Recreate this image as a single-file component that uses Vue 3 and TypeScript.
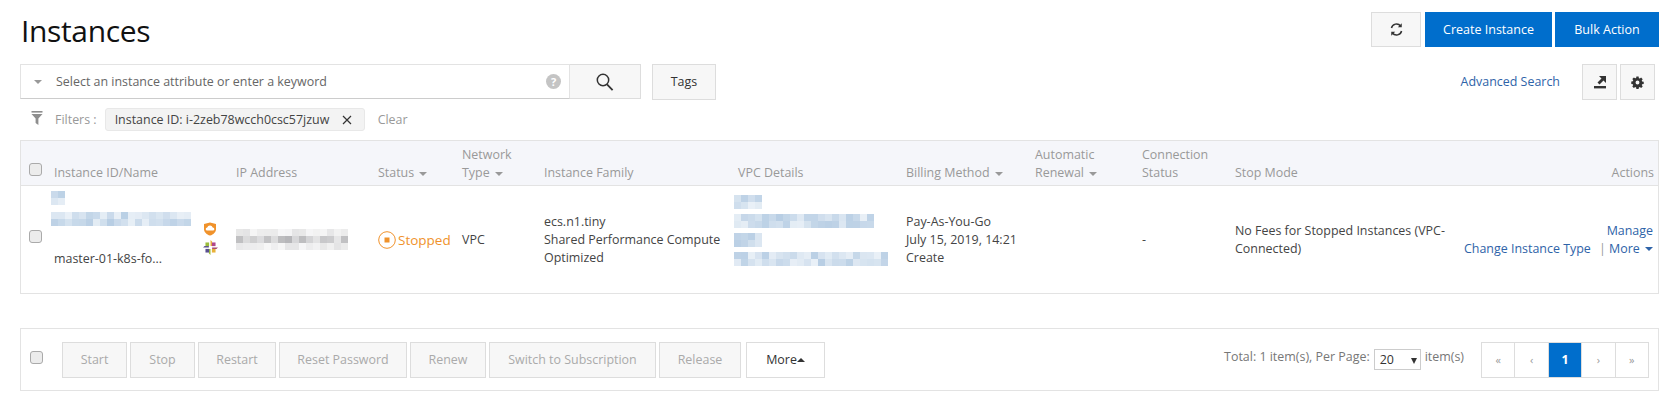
<script setup lang="ts">
type Cell = { a: number }
type Blur = { cols: number; rows: number; tint: string; cells: Cell[] }

// fake pixelated block, same output every run
function blur(cols: number, rows: number, tint: string, seed: number, strength = 0.35): Blur {
  const cells: Cell[] = []
  let s = seed
  for (let i = 0; i < cols * rows; i++) {
    s = (s * 9301 + 49297) % 233280
    const outer = rows > 2 && (i < cols || i >= cols * (rows - 1))
    cells.push({ a: (0.14 + (s / 233280) * strength) * (outer ? 0.35 : 1) })
  }
  return { cols, rows, tint, cells }
}

const blueTint = '110, 155, 200'
const greyTint = '110, 110, 115'

const nameBlurs = [blur(2, 2, blueTint, 11), blur(20, 2, blueTint, 27)]
const ipBlur = blur(16, 3, greyTint, 41, 0.4)
const vpcBlurs = [
  { b: blur(4, 2, blueTint, 5), cls: 'vb-a' },
  { b: blur(20, 2, blueTint, 73), cls: 'vb-b' },
  { b: blur(4, 2, blueTint, 91), cls: 'vb-c' },
  { b: blur(22, 2, blueTint, 17), cls: 'vb-d' },
]

const bulkButtons = ['Start', 'Stop', 'Restart', 'Reset Password', 'Renew', 'Switch to Subscription', 'Release']
const pages = ['«', '‹', '1', '›', '»']
</script>

<template>
  <div class="page">
    <!-- title row -->
    <div class="top">
      <h1>Instances</h1>
      <div class="top-actions">
        <button class="btn icon-btn refresh">
          <svg viewBox="0 0 16 16" width="15" height="15" fill="none" stroke="#333" stroke-width="1.6">
            <path d="M2.6 6.4A5.6 5.6 0 0 1 12.4 4.2" />
            <path d="M13.4 9.6A5.6 5.6 0 0 1 3.6 11.8" />
            <path d="M13.6 1.4v4.2H9.4z" fill="#333" stroke="none" />
            <path d="M2.4 14.6v-4.2h4.2z" fill="#333" stroke="none" />
          </svg>
        </button>
        <button class="btn primary create">Create Instance</button>
        <button class="btn primary bulk">Bulk Action</button>
      </div>
    </div>

    <!-- search row -->
    <div class="search-row">
      <div class="search">
        <span class="caret grey"></span>
        <span class="placeholder">Select an instance attribute or enter a keyword</span>
        <span class="help">?</span>
      </div>
      <button class="btn search-btn">
        <svg viewBox="0 0 20 20" width="20" height="20" fill="none" stroke="#333" stroke-width="1.5">
          <circle cx="8" cy="8" r="5.7" />
          <path d="M12 12.4l5.6 5.8" stroke-width="1.8" />
        </svg>
      </button>
      <button class="btn tags">Tags</button>
      <a class="link advanced">Advanced Search</a>
      <button class="btn square">
        <svg viewBox="0 0 14 14" width="14" height="14" fill="#333">
          <rect x="1" y="11" width="12" height="2.4" />
          <path d="M6 1h7v7l-2.500-2.500L6.500 9.500 4.500 7.500 8.500 3.500z" />
        </svg>
      </button>
      <button class="btn square gear-btn">
        <svg viewBox="0 0 14 14" width="13" height="13">
          <path fill="#333" fill-rule="evenodd" d="M5.8.6h2.4l.3 1.7 1 .4 1.4-1 1.7 1.7-1 1.4.4 1 1.7.3v2.4l-1.7.3-.4 1 1 1.4-1.7 1.7-1.4-1-1 .4-.3 1.7H5.8l-.3-1.7-1-.4-1.4 1-1.7-1.7 1-1.4-.4-1-1.7-.3V5.9l1.7-.3.4-1-1-1.4 1.7-1.7 1.4 1 1-.4zM7 4.9a2.1 2.1 0 1 0 0 4.2 2.1 2.1 0 0 0 0-4.2z" />
        </svg>
      </button>
    </div>

    <!-- active filters -->
    <div class="filters">
      <svg class="funnel" viewBox="0 0 12 14" width="12" height="14" fill="#8e8e8e">
        <rect x="0.5" y="0" width="11" height="1.6" />
        <path d="M0.5 3h11L7.4 7.6V14l-2.8-2V7.6z" />
      </svg>
      <span class="filters-label">Filters :</span>
      <span class="chip">
        Instance ID: i-2zeb78wcch0csc57jzuw
        <svg viewBox="0 0 10 10" width="10" height="10" stroke="#333" stroke-width="1.2">
          <path d="M1 1l8 8M9 1l-8 8" />
        </svg>
      </span>
      <span class="clear">Clear</span>
    </div>

    <!-- table -->
    <div class="table">
      <div class="grid head">
        <div class="cb-cell"><input type="checkbox" class="cb" /></div>
        <div>Instance ID/Name</div>
        <div>IP Address</div>
        <div>Status <span class="caret grey"></span></div>
        <div>Network<br />Type <span class="caret grey"></span></div>
        <div>Instance Family</div>
        <div class="pad-vpc">VPC Details</div>
        <div>Billing Method <span class="caret grey"></span></div>
        <div>Automatic<br />Renewal <span class="caret grey"></span></div>
        <div>Connection<br />Status</div>
        <div>Stop Mode</div>
        <div class="right">Actions</div>
      </div>

      <div class="grid row">
        <div class="cb-cell mid"><input type="checkbox" class="cb" /></div>
        <div class="name-cell">
          <div class="name-col">
            <div class="mosaic nb-a" :style="{ gridTemplateColumns: `repeat(${nameBlurs[0].cols}, 7px)` }">
              <i v-for="(c, i) in nameBlurs[0].cells" :key="i" :style="{ background: `rgba(${nameBlurs[0].tint}, ${c.a})` }"></i>
            </div>
            <div class="mosaic nb-b" :style="{ gridTemplateColumns: `repeat(${nameBlurs[1].cols}, 7px)` }">
              <i v-for="(c, i) in nameBlurs[1].cells" :key="i" :style="{ background: `rgba(${nameBlurs[1].tint}, ${c.a})` }"></i>
            </div>
            <div class="name-text">master-01-k8s-fo...</div>
          </div>
          <div class="name-icons">
            <svg viewBox="0 0 14 14" width="14" height="14">
              <path d="M7 .4l6 1.6v5.2c0 3-2.6 5.2-6 6.4-3.4-1.200-6-3.400-6-6.400V2z" fill="#f0922b" />
              <path d="M4.200 8.600a1.500 1.500 0 0 1 0-3 2.900 2.900 0 0 1 5.500-.2 1.600 1.600 0 0 1 .1 3.200z" fill="#fff" />
            </svg>
            <svg viewBox="0 0 14 14" width="15" height="15">
              <path d="M7 0l1.500 1.500v4H7z" fill="#e8b23a" />
              <path d="M14 7l-1.500 1.500h-4V7z" fill="#a8466f" />
              <path d="M7 14l-1.500-1.500v-4H7z" fill="#9bbd3c" />
              <path d="M0 7l1.500-1.500h4V7z" fill="#5a4f8f" />
              <rect x="8.300" y="2.300" width="3.400" height="3.400" fill="#b0468c" />
              <rect x="8.300" y="8.300" width="3.400" height="3.400" fill="#e8b23a" />
              <rect x="2.300" y="8.300" width="3.400" height="3.400" fill="#5a4f8f" />
              <rect x="2.300" y="2.300" width="3.400" height="3.400" fill="#9bbd3c" />
            </svg>
          </div>
        </div>
        <div class="mid">
          <div class="mosaic" :style="{ gridTemplateColumns: `repeat(${ipBlur.cols}, 7px)` }">
            <i v-for="(c, i) in ipBlur.cells" :key="i" :style="{ background: `rgba(${ipBlur.tint}, ${c.a})` }"></i>
          </div>
        </div>
        <div class="mid stopped">
          <svg viewBox="0 0 18 18" width="18" height="18" fill="none">
            <circle cx="9" cy="9" r="8.300" stroke="#f0922b" />
            <rect x="6.500" y="6.500" width="5" height="5" fill="#f0922b" />
          </svg>
          Stopped
        </div>
        <div class="mid">VPC</div>
        <div class="mid">ecs.n1.tiny<br />Shared Performance Compute<br />Optimized</div>
        <div class="vpc-cell">
          <div
            v-for="v in vpcBlurs"
            :key="v.cls"
            class="mosaic"
            :class="v.cls"
            :style="{ gridTemplateColumns: `repeat(${v.b.cols}, 7px)` }"
          >
            <i v-for="(c, i) in v.b.cells" :key="i" :style="{ background: `rgba(${v.b.tint}, ${c.a})` }"></i>
          </div>
        </div>
        <div class="mid">Pay-As-You-Go<br />July 15, 2019, 14:21<br />Create</div>
        <div class="mid"></div>
        <div class="mid">-</div>
        <div class="mid stop-text">No Fees for Stopped Instances (VPC-Connected)</div>
        <div class="actions">
          <a class="link change">Change Instance Type</a>
          <div class="actions-right">
            <a class="link">Manage</a>
            <div><span class="pipe">|</span> <a class="link">More <span class="caret blue"></span></a></div>
          </div>
        </div>
      </div>
    </div>

    <!-- bulk actions and pager -->
    <div class="footer">
      <input type="checkbox" class="cb foot-cb" />
      <div class="bulk-btns">
        <button v-for="b in bulkButtons" :key="b" class="btn off" :class="'w-' + b.split(' ')[0].toLowerCase()">{{ b }}</button>
        <button class="btn more">More<span class="caret up"></span></button>
      </div>
      <div class="pager-wrap">
        <span class="total">Total: 1 item(s), Per Page:</span>
        <span class="select">20 <span class="caret dark"></span></span>
        <span class="total">item(s)</span>
        <div class="pager">
          <span v-for="p in pages" :key="p" class="pg" :class="{ on: p === '1' }">{{ p }}</span>
        </div>
      </div>
    </div>
  </div>
</template>

<style>
html,
body {
  margin: 0;
  background: #fff;
}
</style>

<style scoped>
.page {
  width: 1680px;
  height: 402px;
  box-sizing: border-box;
  padding: 12px 21px 0 20px;
  overflow: hidden;
  font-family: "Open Sans", "Noto Sans", sans-serif;
  font-size: 12.45px;
  line-height: 18px;
  color: #444;
}

.top {
  display: flex;
  justify-content: space-between;
  height: 35px;
}
h1 {
  margin: 0 0 0 1px;
  font-size: 30px;
  line-height: 38px;
  font-weight: 400;
  color: #111;
  letter-spacing: -0.35px;
}
.top-actions {
  display: flex;
}

.btn {
  box-sizing: border-box;
  border: 1px solid #ddd;
  background: #f7f7f7;
  font: inherit;
  color: #333;
  padding: 0;
  display: flex;
  align-items: center;
  justify-content: center;
}
.primary {
  background: #006ecc;
  border-color: #006ecc;
  color: #fff;
  font-size: 12.5px;
}
.refresh {
  width: 50px;
  margin-right: 4px;
}
.create {
  width: 127px;
  margin-right: 3px;
}
.bulk {
  width: 104px;
}

.search-row {
  display: flex;
  align-items: flex-start;
  margin-top: 17px;
  padding-right: 4px;
}
.search {
  box-sizing: border-box;
  width: 550px;
  height: 35px;
  border: 1px solid #e3e3e3;
  border-bottom-color: #ccc;
  display: flex;
  align-items: center;
  padding: 0 8px 0 11px;
}
.search .placeholder {
  margin-left: 14px;
  flex: 1;
  color: #666;
}
.help {
  width: 15px;
  height: 15px;
  border-radius: 50%;
  background: #c4c4c4;
  color: #fff;
  font-size: 11px;
  font-weight: 700;
  line-height: 15px;
  text-align: center;
}
.search-btn {
  width: 71px;
  height: 35px;
  border-left: 0;
}
.tags {
  width: 64px;
  height: 36px;
  margin-left: 11px;
}
.advanced {
  margin-left: auto;
  margin-right: 22px;
  line-height: 36px;
}
.square {
  width: 35px;
  height: 36px;
}
.gear-btn {
  margin-left: 3px;
}
.link {
  color: #2e63a8;
}

.caret {
  display: inline-block;
  width: 0;
  height: 0;
  border-left: 4px solid transparent;
  border-right: 4px solid transparent;
  border-top: 4px solid #999;
  vertical-align: middle;
  margin-left: 2px;
}
.caret.blue {
  border-top-color: #2e63a8;
}
.caret.dark {
  border-top-color: #333;
  margin-left: 14px;
  border-left-width: 3.5px;
  border-right-width: 3.5px;
  border-top-width: 6px;
}
.caret.up {
  border-top: 0;
  border-bottom: 4px solid #333;
  margin-left: 0;
}

.filters {
  display: flex;
  align-items: center;
  height: 23px;
  margin-top: 8px;
  padding-left: 11px;
  color: #999;
}
.filters-label {
  margin-left: 12px;
}
.funnel {
  margin-top: -3px;
}
.chip {
  box-sizing: border-box;
  width: 260px;
  height: 23px;
  margin-left: 8px;
  padding: 0 12px 0 9px;
  display: flex;
  align-items: center;
  justify-content: space-between;
  background: #f3f3f3;
  border: 1px solid #e8e8e8;
  border-radius: 3px;
  color: #444;
}
.clear {
  margin-left: 13px;
}

.table {
  margin-top: 9px;
  border: 1px solid #e3e3e3;
  height: 154px;
  box-sizing: border-box;
}
.grid {
  display: grid;
  grid-template-columns: 33px 182px 142px 84px 82px 190px 172px 129px 107px 93px 229px 1fr;
}
.head {
  height: 45px;
  box-sizing: border-box;
  background: #f5f6fa;
  border-bottom: 1px solid #e3e3e3;
  color: #999;
  align-items: end;
  padding-bottom: 3px;
}
.pad-vpc {
  padding-left: 4px;
}
.right {
  text-align: right;
  padding-right: 4px;
}
.cb-cell {
  padding-left: 8px;
  align-self: end;
}
.cb-cell.mid {
  align-self: start;
  padding-top: 44px;
}
.cb {
  appearance: none;
  display: block;
  width: 13px;
  height: 13px;
  margin: 0 0 6px;
  border: 1px solid #aaa;
  border-radius: 3px;
  background: #ececec;
  box-sizing: border-box;
}
.row {
  height: 107px;
}
.mid {
  display: flex;
  flex-direction: column;
  justify-content: center;
  align-items: flex-start;
}
.mosaic {
  display: grid;
  grid-auto-rows: 7px;
}
.mosaic i {
  display: block;
}

.name-cell {
  display: flex;
}
.name-col {
  width: 149px;
  margin-left: -3px;
  padding-top: 5px;
}
.nb-b {
  margin-top: 7px;
}
.name-text {
  margin: 24px 0 0 3px;
}
.name-icons {
  display: flex;
  flex-direction: column;
  gap: 4px;
  margin-top: 36px;
  margin-left: 3px;
}
.stopped {
  flex-direction: row;
  justify-content: flex-start;
  align-items: center;
  gap: 2px;
  color: #f0922b;
  font-size: 13.5px;
}
.vpc-cell {
  padding-top: 9px;
}
.vb-b {
  margin-top: 5px;
}
.vb-c {
  margin-top: 5px;
}
.vb-d {
  margin-top: 5px;
}
.stop-text {
  padding-right: 10px;
}
.actions {
  display: flex;
  justify-content: space-between;
  align-items: center;
  padding-right: 5px;
}
.change {
  margin-top: 18px;
}
.actions-right {
  text-align: right;
}
.pipe {
  color: #999;
}

.footer {
  margin-top: 34px;
  height: 63px;
  box-sizing: border-box;
  border: 1px solid #e3e3e3;
  display: flex;
  align-items: flex-start;
  padding: 13px 9px 0 9px;
}
.foot-cb {
  margin-top: 9px;
}
.bulk-btns {
  display: flex;
  gap: 3px;
  margin-left: 19px;
}
.bulk-btns .btn {
  height: 36px;
}
.off {
  color: #aaa;
  background: #f7f7f7;
}
.w-start,
.w-stop {
  width: 65px;
}
.w-restart {
  width: 78px;
}
.w-reset {
  width: 128px;
}
.w-renew {
  width: 76px;
}
.w-switch {
  width: 167px;
}
.w-release {
  width: 82px;
}
.bulk-btns .more {
  width: 79px;
  margin-left: 2px;
  background: #fff;
}
.pager-wrap {
  margin-left: auto;
  display: flex;
  align-items: flex-start;
  color: #777;
}
.total {
  margin-top: 6px;
}
.select {
  box-sizing: border-box;
  width: 47px;
  height: 21px;
  margin: 7px 4px 0;
  padding-left: 5px;
  border: 1px solid #ccc;
  color: #333;
  line-height: 20px;
}
.pager {
  display: flex;
  margin-left: 17px;
  height: 36px;
  border: 1px solid #ddd;
  box-sizing: border-box;
}
.pg {
  width: 32.4px;
  display: flex;
  align-items: center;
  justify-content: center;
  border-right: 1px solid #ddd;
  color: #999;
  font-size: 11px;
}
.pg:last-child {
  border-right: 0;
}
.pg.on {
  background: #006ecc;
  color: #fff;
  font-size: 12.45px;
  font-weight: 700;
}
</style>
